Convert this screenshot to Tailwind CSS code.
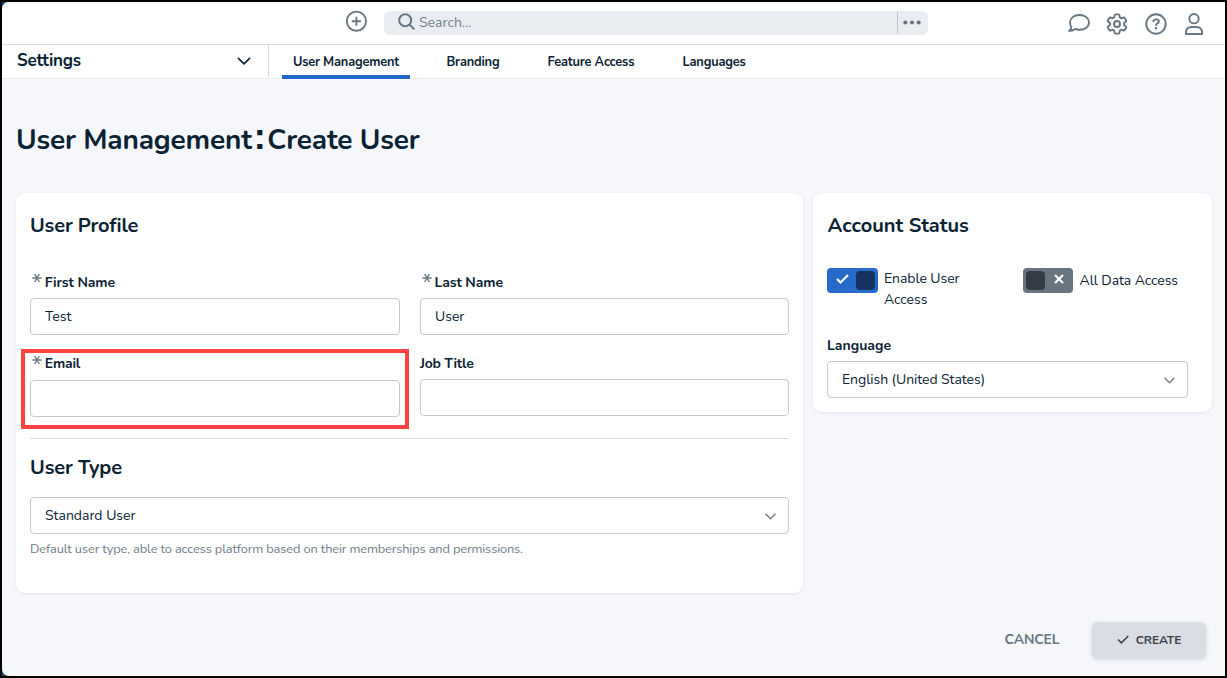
<!DOCTYPE html>
<html lang="en">
<head>
    <meta charset="UTF-8">
    <meta name="viewport" content="width=device-width, initial-scale=1.0">
    <title>User Management: Create User</title>
    <script src="https://cdn.jsdelivr.net/npm/@tailwindcss/browser@4"></script>
</head>
<body class="bg-black p-[2px] h-screen overflow-hidden font-['Nunito','Open_Sans',sans-serif] text-[#0a2233]">

<div class="h-full bg-[#0f4a7b]">
<div class="flex flex-col h-full rounded-l-[7px] bg-[#f5f7fb] overflow-hidden">

    <!-- Top bar -->
    <header class="h-[43px] shrink-0 bg-white border-b border-[#d9dcdf] flex items-start text-[#687681]">
        <svg class="w-[22px] h-[22px] ml-[343px] mt-[8px]" viewBox="0 0 22 22" fill="none" stroke="currentColor" stroke-width="1.9" stroke-linecap="round">
            <circle cx="11.4" cy="11.2" r="9.6"/>
            <path d="M11.4 7.4v7.6M7.6 11.2h7.6"/>
        </svg>
        <div class="ml-[17px] mt-[9px] w-[544px] h-6 rounded-md bg-[#e9edf2] flex items-center">
            <svg class="w-[17px] h-[17px] ml-[13.5px] -mt-[3px]" viewBox="0 0 17 17" fill="none" stroke="currentColor" stroke-width="2" stroke-linecap="round">
                <circle cx="7.2" cy="7.2" r="6"/>
                <path d="M11.6 11.6l4.2 4.2"/>
            </svg>
            <span class="ml-[4.5px] text-sm leading-5 text-[#74818c]">Search...</span>
            <div class="ml-auto h-[22px] w-[31px] border-l border-[#c5c9cd] flex items-center pl-[5px] pb-[2px]">
                <svg class="w-[18px] h-[5px]" viewBox="0 0 18 5" fill="currentColor">
                    <circle cx="2.4" cy="2.5" r="2.1"/><circle cx="9" cy="2.5" r="2.1"/><circle cx="15.6" cy="2.5" r="2.1"/>
                </svg>
            </div>
        </div>
        <div class="ml-auto mr-[19px] mt-[10px] flex gap-[14.5px]">
            <svg class="w-6 h-6" viewBox="0 0 24 24" fill="none" stroke="currentColor" stroke-width="1.9" stroke-linejoin="round">
                <path d="M12.5 3c5.5 0 9.5 3.2 9.5 7.400s-4 7.400-9.500 7.400c-1.600 0-3.100-.3-4.400-.9-1.500 1.100-3.500 2-6 2 1.200-1 2-2.300 2.300-3.700C3.500 13.900 3 12.300 3 10.400 3 6.200 7 3 12.500 3z"/>
            </svg>
            <svg class="w-6 h-6" viewBox="0 0 24 24" fill="none" stroke="currentColor" stroke-width="1.9" stroke-linejoin="round">
                <path d="M10.600 2.400h2.800c.5 0 .9.300 1 .8l.4 2.200 1.500.9 2.200-.8c.5-.2 1 0 1.200.4l1.400 2.400c.2.400.2.900-.2 1.200L19.100 11v2l1.800 1.500c.4.300.5.800.2 1.200l-1.400 2.400c-.2.400-.7.600-1.200.4l-2.200-.8-1.500.9-.4 2.200c-.1.500-.5.800-1 .8h-2.800c-.5 0-.9-.3-1-.8l-.4-2.200-1.500-.9-2.200.8c-.5.200-1 0-1.200-.4l-1.400-2.400c-.2-.4-.2-.9.200-1.200L4.900 13v-2L3.100 9.500c-.4-.3-.5-.8-.2-1.200l1.400-2.400c.2-.4.700-.6 1.200-.4l2.200.8 1.500-.9.400-2.200c.1-.5.500-.8 1-.8z"/>
                <circle cx="12" cy="12" r="3"/>
            </svg>
            <svg class="w-6 h-6" viewBox="0 0 24 24" fill="none" stroke="currentColor" stroke-width="1.9" stroke-linecap="round">
                <circle cx="12" cy="12" r="9.7"/>
                <path d="M9.300 9.300c.3-1.200 1.300-1.900 2.800-1.900 1.700 0 2.800.9 2.800 2.100 0 1.800-2.800 1.900-2.800 3.500"/>
                <circle cx="12" cy="16.2" r=".6" fill="currentColor" stroke-width="1.3"/>
            </svg>
            <svg class="w-6 h-6" viewBox="0 0 24 24" fill="none" stroke="currentColor" stroke-width="1.9" stroke-linejoin="round">
                <circle cx="12" cy="6.7" r="4.7"/>
                <path d="M3.900 22v-1.500c0-3.300 2.200-5.500 5.500-5.500h5.200c3.300 0 5.500 2.200 5.500 5.500V22z"/>
            </svg>
        </div>
    </header>

    <!-- Settings nav -->
    <nav class="h-[34px] shrink-0 bg-white border-b border-[#e9edf0] flex">
        <div class="w-[267px] h-[32px] border-r border-[#d9dcdf] pl-[15px] pr-[17px] flex items-center justify-between">
            <span class="text-[17px] leading-6 font-bold tracking-[-0.2px]">Settings</span>
            <svg class="w-[14px] h-[8px]" viewBox="0 0 14 8" fill="none" stroke="currentColor" stroke-width="1.6" stroke-linecap="round" stroke-linejoin="round"><path d="M1.500 1.400L7 6.900l5.500-5.500"/></svg>
        </div>
        <div class="flex items-start text-[12.8px] leading-[34px] font-bold tracking-[-0.18px] whitespace-nowrap">
            <a class="ml-[13px] w-[128px] h-[34px] text-center border-b-4 border-[#2467c6]">User Management</a>
            <a class="ml-[36.5px] w-[85px]">Branding</a>
            <a class="ml-[16px] w-[119px]">Feature Access</a>
            <a class="ml-[16px]">Languages</a>
        </div>
    </nav>

    <main class="flex-1 pl-[14px] pr-[13px]">
        <h1 class="h-[114px] pt-[37px] flex items-baseline text-[28px] leading-[42px] font-bold tracking-[-0.17px]">
            <span>User Management</span><span class="w-[15.5px] text-center font-['Liberation_Sans',sans-serif] text-[36px] leading-[42px]">:</span><span>Create User</span>
        </h1>

        <div class="flex items-start gap-[10px]">
            <!-- User Profile -->
            <section class="w-[787px] h-[400px] bg-white rounded-[9px] shadow-[0_1px_3px_rgba(30,60,90,0.1)] px-[14px]">
                <h2 class="h-[78px] pt-[18px] text-xl leading-[30px] font-bold tracking-[-0.15px]">User Profile</h2>
                <div class="grid grid-cols-[370px_369px] gap-x-[20px] text-sm">
                    <div class="h-[79px]">
                        <label class="h-[27px] flex font-bold leading-6 tracking-[-0.12px]">
                            <svg class="w-[10px] h-[10px] ml-[2.3px] mr-[2.5px] mt-[2px] text-[#6f7b86]" viewBox="0 0 10 10" stroke="currentColor" stroke-width="1.5"><path d="M.3 5h9.400M2.700 1l4.600 8M7.300 1L2.700 9"/></svg>First Name
                        </label>
                        <div class="h-[37px] border border-[#c6c8ca] rounded px-[14px] leading-[35px]">Test</div>
                    </div>
                    <div class="h-[79px]">
                        <label class="h-[27px] flex font-bold leading-6 tracking-[-0.12px]">
                            <svg class="w-[10px] h-[10px] ml-[2.3px] mr-[2.2px] mt-[2px] text-[#6f7b86]" viewBox="0 0 10 10" stroke="currentColor" stroke-width="1.5"><path d="M.3 5h9.400M2.700 1l4.600 8M7.300 1L2.700 9"/></svg>Last Name
                        </label>
                        <div class="h-[37px] border border-[#c6c8ca] rounded px-[14px] leading-[35px]">User</div>
                    </div>
                    <div class="relative h-[88px]">
                        <label class="h-[30px] pt-[2px] flex font-bold leading-6 tracking-[-0.2px]">
                            <svg class="w-[10px] h-[10px] ml-[2.3px] mr-[2.5px] mt-[3px] text-[#6f7b86]" viewBox="0 0 10 10" stroke="currentColor" stroke-width="1.5"><path d="M.3 5h9.400M2.700 1l4.600 8M7.300 1L2.700 9"/></svg>Email
                        </label>
                        <div class="h-[37px] border border-[#c6c8ca] rounded"></div>
                        <!-- Highlight around the email field -->
                        <div class="absolute -left-[9px] -top-px w-[388px] h-[80px] border-4 border-[#ff4242]"></div>
                    </div>
                    <div class="h-[88px]">
                        <label class="h-[29px] pt-[2px] flex font-bold leading-6 tracking-[-0.25px]">Job Title</label>
                        <div class="h-[37px] border border-[#c6c8ca] rounded"></div>
                    </div>
                </div>
                <div class="border-t border-[#d9dbdd]">
                    <h2 class="h-[58px] pt-[14px] text-xl leading-[30px] font-bold tracking-[-0.1px]">User Type</h2>
                    <div class="h-[37px] border border-[#c6c8ca] rounded pl-[14px] pr-[12px] flex items-center justify-between text-sm">
                        <span class="leading-5">Standard User</span>
                        <svg class="w-[11px] h-[7px] mt-[2px] text-[#6f7b86]" viewBox="0 0 11 7" fill="none" stroke="currentColor" stroke-width="1.4"><path d="M.6.8l4.900 4.900L10.400.8"/></svg>
                    </div>
                    <p class="mt-[5px] text-[12.8px] leading-5 tracking-[-0.13px] text-[#6f7c87] whitespace-nowrap">Default user type, able to access platform based on their memberships and permissions.</p>
                </div>
            </section>

            <!-- Account Status -->
            <section class="w-[399px] h-[219px] bg-white rounded-[9px] shadow-[0_1px_3px_rgba(30,60,90,0.1)] px-[14px]">
                <h2 class="h-[75px] pt-[18px] pl-[0.5px] text-xl leading-[30px] font-bold">Account Status</h2>
                <div class="h-[66px] flex items-start text-sm leading-[21px] tracking-[-0.07px]">
                    <div class="w-[51px] h-[25px] rounded bg-[#266aca] text-white p-[3px] flex items-center justify-between">
                        <svg class="w-[13px] h-[10px] ml-[6px] -mt-[3px]" viewBox="0 0 13 10" fill="none" stroke="currentColor" stroke-width="2.1"><path d="M1 5l3.500 3.500L12 1"/></svg>
                        <div class="w-[19px] h-[19px] rounded bg-[#153461]"></div>
                    </div>
                    <span class="ml-[6px] w-[139px] pr-[40px]">Enable User Access</span>
                    <div class="w-[50px] h-[25px] rounded bg-[#687580] text-white p-[3px] flex items-center justify-between">
                        <div class="w-[19px] h-[19px] rounded bg-[#343c43]"></div>
                        <svg class="w-[10px] h-[10px] mr-[6px] -mt-[3px]" viewBox="0 0 10 10" fill="none" stroke="currentColor" stroke-width="2.2"><path d="M1 1l8 8M9 1L1 9"/></svg>
                    </div>
                    <span class="ml-[6.5px] mt-[2px] whitespace-nowrap">All Data Access</span>
                </div>
                <div class="w-[361px] text-sm">
                    <label class="block h-[27px] font-bold leading-6">Language</label>
                    <div class="h-[37px] border border-[#c6c8ca] rounded pl-[14px] pr-[12px] flex items-center justify-between">
                        <span class="leading-5 tracking-[-0.05px]">English (United States)</span>
                        <svg class="w-[11px] h-[7px] mt-[2px] text-[#6f7b86]" viewBox="0 0 11 7" fill="none" stroke="currentColor" stroke-width="1.4"><path d="M.6.8l4.900 4.900L10.400.8"/></svg>
                    </div>
                </div>
            </section>
        </div>

        <!-- Form buttons -->
        <div class="mt-[29px] pr-[6px] flex justify-end font-bold">
            <button class="w-[120px] h-[34px] pt-px text-sm text-[#687681] tracking-[-0.15px]">CANCEL</button>
            <button class="w-[114px] h-[37px] rounded-md bg-[#d9dde4] text-[#3d4145] text-xs tracking-[-0.1px] shadow-[0_1px_4px_rgba(30,60,90,0.16)] flex items-center justify-center gap-[7px]">
                <svg class="w-[12px] h-[9px] -mt-[3px]" viewBox="0 0 12 9" fill="none" stroke="currentColor" stroke-width="1.5"><path d="M1 4.500l3.400 3.400L11.200 1"/></svg>
                <span class="-mt-px">CREATE</span>
            </button>
        </div>
    </main>
</div>
</div>

</body>
</html>
